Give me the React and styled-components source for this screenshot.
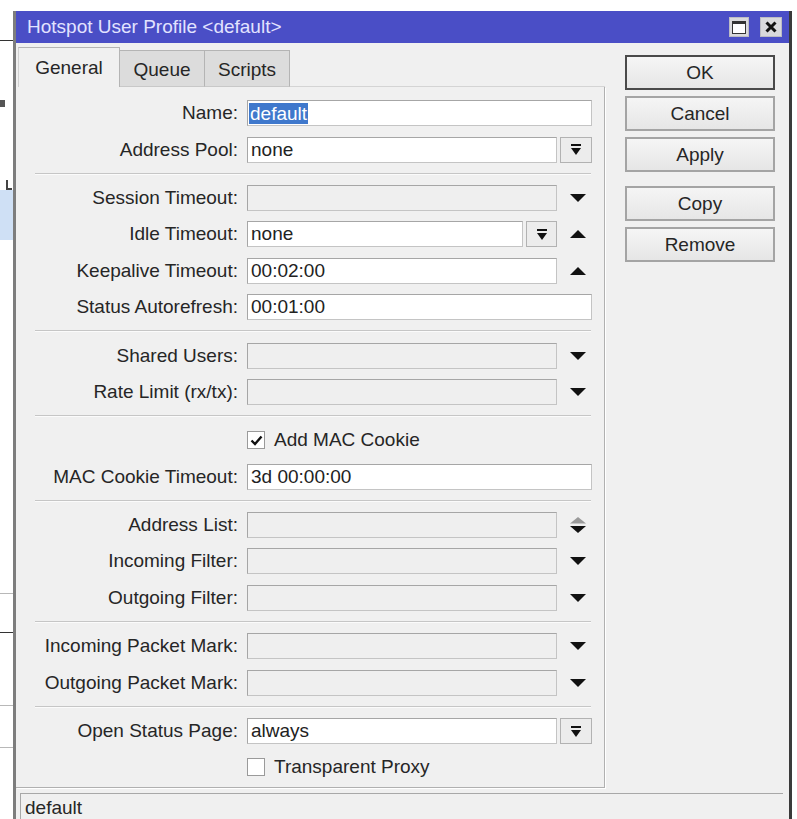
import React from 'react';
import styled, { createGlobalStyle } from 'styled-components';

const GlobalStyle = createGlobalStyle`
  html, body {
    margin: 0;
    padding: 0;
    background: #ffffff;
  }
  body {
    font-family: "Liberation Sans", Arial, sans-serif;
    color: #262626;
  }
`;

// small glyphs used by the form fields
const DownArrow = () => (
    <svg width="16" height="8" viewBox="0 0 16 8">
        <polygon points="0,0 16,0 8,8" fill="#111" />
    </svg>
);

const UpArrow = () => (
    <svg width="16" height="8" viewBox="0 0 16 8">
        <polygon points="0,8 16,8 8,0" fill="#111" />
    </svg>
);

const UpDownArrow = () => (
    <svg width="16" height="18" viewBox="0 0 16 18">
        <polygon points="0,7.5 16,7.5 8,1" fill="#9a9a9a" />
        <polygon points="0,10 16,10 8,17" fill="#111" />
    </svg>
);

const ListIcon = () => (
    <svg width="12" height="13" viewBox="0 0 12 13">
        <rect x="1" y="1" width="10" height="2" fill="#111" />
        <polygon points="1,5 11,5 6,12" fill="#111" />
    </svg>
);

const CheckMark = () => (
    <svg width="13" height="11" viewBox="0 0 13 11">
        <polyline points="1.5,5.5 5,9 11.5,1.5" fill="none" stroke="#111" strokeWidth="2.4" />
    </svg>
);

export default function App() {
    return (
        <>
            <GlobalStyle />
            <Screen>
                {/* bits of the window lying underneath */}
                <Backdrop>
                    <BackLine $top={29} $dark />
                    <BackMark $top={59} />
                    <BackCorner $top={73} />
                    <BackSelection />
                    <BackLine $top={353} />
                    <BackLine $top={38} $dark />
                    <BackLine $top={72} />
                    <BackLine $top={41} />
                </Backdrop>

                <Window>
                    <TitleBar>
                        <TitleText>Hotspot User Profile &lt;default&gt;</TitleText>
                        <TitleButtons>
                            <TitleButton $w={20}>
                                <MaxIcon />
                            </TitleButton>
                            <TitleButton $w={22}>
                                <svg width="12" height="12" viewBox="0 0 12 12">
                                    <path d="M1.5 1.5 L10.5 10.5 M10.5 1.5 L1.5 10.5" stroke="#111" strokeWidth="3" />
                                </svg>
                            </TitleButton>
                        </TitleButtons>
                    </TitleBar>

                    <Body>
                        <LeftColumn>
                            <TabStrip>
                                <Tab $active>General</Tab>
                                <Tab>Queue</Tab>
                                <Tab>Scripts</Tab>
                                <TabFiller />
                            </TabStrip>

                            <Panel>
                                <Row>
                                    <Label>Name:</Label>
                                    <Field>
                                        <Input>
                                            <Selected>default</Selected>
                                        </Input>
                                    </Field>
                                </Row>
                                <Row>
                                    <Label>Address Pool:</Label>
                                    <Field>
                                        <Input>none</Input>
                                        <DropButton><ListIcon /></DropButton>
                                    </Field>
                                </Row>

                                <Divider />

                                <Row>
                                    <Label>Session Timeout:</Label>
                                    <Field>
                                        <Input $disabled />
                                        <ArrowSlot><DownArrow /></ArrowSlot>
                                    </Field>
                                </Row>
                                <Row>
                                    <Label>Idle Timeout:</Label>
                                    <Field>
                                        <Input>none</Input>
                                        <DropButton $w={31}><ListIcon /></DropButton>
                                        <ArrowSlot><UpArrow /></ArrowSlot>
                                    </Field>
                                </Row>
                                <Row>
                                    <Label>Keepalive Timeout:</Label>
                                    <Field>
                                        <Input>00:02:00</Input>
                                        <ArrowSlot><UpArrow /></ArrowSlot>
                                    </Field>
                                </Row>
                                <Row>
                                    <Label>Status Autorefresh:</Label>
                                    <Field>
                                        <Input>00:01:00</Input>
                                    </Field>
                                </Row>

                                <Divider />

                                <Row>
                                    <Label>Shared Users:</Label>
                                    <Field>
                                        <Input $disabled />
                                        <ArrowSlot><DownArrow /></ArrowSlot>
                                    </Field>
                                </Row>
                                <Row>
                                    <Label>Rate Limit (rx/tx):</Label>
                                    <Field>
                                        <Input $disabled />
                                        <ArrowSlot><DownArrow /></ArrowSlot>
                                    </Field>
                                </Row>

                                <Divider />

                                <Row>
                                    <span />
                                    <CheckRow>
                                        <CheckBox><CheckMark /></CheckBox>
                                        Add MAC Cookie
                                    </CheckRow>
                                </Row>
                                <Row>
                                    <Label>MAC Cookie Timeout:</Label>
                                    <Field>
                                        <Input>3d 00:00:00</Input>
                                    </Field>
                                </Row>

                                <Divider />

                                <Row>
                                    <Label>Address List:</Label>
                                    <Field>
                                        <Input $disabled />
                                        <ArrowSlot><UpDownArrow /></ArrowSlot>
                                    </Field>
                                </Row>
                                <Row>
                                    <Label>Incoming Filter:</Label>
                                    <Field>
                                        <Input $disabled />
                                        <ArrowSlot><DownArrow /></ArrowSlot>
                                    </Field>
                                </Row>
                                <Row>
                                    <Label>Outgoing Filter:</Label>
                                    <Field>
                                        <Input $disabled />
                                        <ArrowSlot><DownArrow /></ArrowSlot>
                                    </Field>
                                </Row>

                                <Divider />

                                <Row>
                                    <Label>Incoming Packet Mark:</Label>
                                    <Field>
                                        <Input $disabled />
                                        <ArrowSlot><DownArrow /></ArrowSlot>
                                    </Field>
                                </Row>
                                <Row>
                                    <Label>Outgoing Packet Mark:</Label>
                                    <Field>
                                        <Input $disabled />
                                        <ArrowSlot><DownArrow /></ArrowSlot>
                                    </Field>
                                </Row>

                                <Divider />

                                <Row>
                                    <Label>Open Status Page:</Label>
                                    <Field>
                                        <Input>always</Input>
                                        <DropButton><ListIcon /></DropButton>
                                    </Field>
                                </Row>
                                <Row>
                                    <span />
                                    <CheckRow>
                                        <CheckBox />
                                        Transparent Proxy
                                    </CheckRow>
                                </Row>
                            </Panel>
                        </LeftColumn>

                        <ButtonColumn>
                            <DialogButton $default>OK</DialogButton>
                            <DialogButton>Cancel</DialogButton>
                            <DialogButton>Apply</DialogButton>
                            <DialogButton $gap>Copy</DialogButton>
                            <DialogButton>Remove</DialogButton>
                        </ButtonColumn>
                    </Body>

                    <StatusBar>default</StatusBar>
                </Window>
            </Screen>
        </>
    );
}

const Screen = styled.div`
    width: 797px;
    height: 819px;
    overflow: hidden;
    display: flex;
    padding-top: 11px;
    box-sizing: border-box;
    background: #ffffff;
`;

// strip of the background window at the left edge
const Backdrop = styled.div`
    width: 13px;
    flex: none;
    display: flex;
    flex-direction: column;
`;
const BackLine = styled.div`
    height: 1px;
    flex: none;
    margin-top: ${p => p.$top}px;
    background: ${p => (p.$dark ? '#333' : '#b8b8b8')};
`;
const BackMark = styled.div`
    width: 5px;
    height: 7px;
    flex: none;
    margin-top: ${p => p.$top}px;
    background: #555;
`;
const BackCorner = styled.div`
    width: 6px;
    height: 10px;
    flex: none;
    margin: ${p => p.$top}px 0 0 6px;
    box-sizing: border-box;
    border-left: 2px solid #444;
    border-bottom: 2px solid #444;
`;
const BackSelection = styled.div`
    height: 50px;
    flex: none;
    background: #cfe0f5;
`;

const Window = styled.div`
    width: 779px;
    flex: none;
    height: 808px;
    display: flex;
    flex-direction: column;
    box-sizing: border-box;
    background: #f0f0f0;
    border-left: 3px solid #7d7d7d;
    border-right: 3px solid #3a3a3a;
`;

const TitleBar = styled.div`
    height: 32px;
    flex: none;
    display: flex;
    align-items: center;
    justify-content: space-between;
    padding: 0 7px 0 11px;
    background: #4a4ec6;
`;
const TitleText = styled.div`
    font-size: 19px;
    color: #e2e3ff;
    white-space: nowrap;
`;
const TitleButtons = styled.div`
    display: flex;
    gap: 11px;
`;
const TitleButton = styled.div`
    width: ${p => p.$w}px;
    height: 20px;
    box-sizing: border-box;
    display: flex;
    align-items: center;
    justify-content: center;
    background: #d9d9dc;
    border: 1px solid #bcbcc4;
`;
const MaxIcon = styled.div`
    width: 14px;
    height: 13px;
    box-sizing: border-box;
    background: #ffffff;
    border: 1px solid #333;
    border-top-width: 3px;
`;

const Body = styled.div`
    display: flex;
    flex: none;
    height: 745px;
`;
const LeftColumn = styled.div`
    width: 589px;
    flex: none;
    display: flex;
    flex-direction: column;
`;

const TabStrip = styled.div`
    height: 44px;
    display: flex;
    align-items: flex-end;
    padding-left: 2px;
`;
const Tab = styled.div`
    box-sizing: border-box;
    height: ${p => (p.$active ? 40 : 37)}px;
    width: ${p => (p.$active ? 102 : 85)}px;
    display: flex;
    align-items: center;
    justify-content: center;
    font-size: 19px;
    color: #262626;
    background: ${p => (p.$active ? '#f0f0f0' : '#dcdcdc')};
    border: 1px solid #b4b4b4;
    border-left: ${p => (p.$active ? '1px solid #d0d0d0' : 'none')};
    border-bottom: ${p => (p.$active ? 'none' : '1px solid #c8c8c8')};
    padding-top: ${p => (p.$active ? 0 : 3)}px;
`;
const TabFiller = styled.div`
    flex: 1;
    border-bottom: 1px solid #d4d4d4;
`;

const Panel = styled.div`
    height: 701px;
    box-sizing: border-box;
    padding-top: 8px;
    border-right: 1px solid #b0b0b0;
    border-bottom: 1px solid #b0b0b0;
    box-shadow: 1px 1px 0 #ffffff;
`;

const Row = styled.div`
    display: grid;
    grid-template-columns: 222px 345px;
    column-gap: 9px;
    height: 36.4px;
    align-items: center;
`;
const Label = styled.div`
    text-align: right;
    white-space: nowrap;
    font-size: 19px;
    color: #262626;
`;
const Field = styled.div`
    display: flex;
    align-items: center;
    gap: 3px;
    height: 26px;
`;
const Input = styled.div`
    flex: 1;
    height: 26px;
    box-sizing: border-box;
    display: flex;
    align-items: center;
    padding-left: 3px;
    font-size: 19px;
    color: #222;
    white-space: nowrap;
    background: ${p => (p.$disabled ? '#efefef' : '#ffffff')};
    border: 1px solid #a6a6a6;
    border-right-color: #c4c4c4;
    border-bottom-color: #c4c4c4;
`;
const Selected = styled.span`
    background: #3f78cc;
    color: #ffffff;
    padding: 0 1px;
    margin-left: -2px;
    line-height: 21px;
`;
const DropButton = styled.div`
    width: ${p => p.$w || 32}px;
    height: 26px;
    flex: none;
    box-sizing: border-box;
    display: flex;
    align-items: center;
    justify-content: center;
    background: #ececec;
    border: 1px solid #b2b2b2;
`;
const ArrowSlot = styled.div`
    width: 35px;
    flex: none;
    display: flex;
    justify-content: flex-end;
    align-items: center;
    padding-right: 6px;
    box-sizing: border-box;
    margin-left: -3px;
`;

const Divider = styled.div`
    height: 1px;
    margin: 5px 13px 5px 19px;
    background: #c6c6c6;
    border-bottom: 1px solid #fbfbfb;
`;

const CheckRow = styled.label`
    display: flex;
    align-items: center;
    gap: 9px;
    font-size: 19px;
    color: #262626;
`;
const CheckBox = styled.span`
    width: 18px;
    height: 18px;
    box-sizing: border-box;
    display: flex;
    align-items: center;
    justify-content: center;
    background: #ffffff;
    border: 1px solid #9a9a9a;
`;

const ButtonColumn = styled.div`
    width: 150px;
    flex: none;
    margin-left: 20px;
    padding-top: 12px;
    display: flex;
    flex-direction: column;
    gap: 6px;
`;
const DialogButton = styled.div`
    height: 35px;
    box-sizing: border-box;
    display: flex;
    align-items: center;
    justify-content: center;
    font-size: 19px;
    color: #262626;
    background: linear-gradient(#f5f5f5, #e6e6e6);
    border: ${p => (p.$default ? '2px solid #4a4a4a' : '2px solid #a4a4a4')};
    margin-top: ${p => (p.$gap ? 8 : 0)}px;
`;

const StatusBar = styled.div`
    flex: 1;
    margin: 5px 6px 0 4px;
    padding: 3px 0 0 4px;
    font-size: 19px;
    color: #262626;
    border-top: 1px solid #a8a8a8;
    border-left: 1px solid #a8a8a8;
`;
